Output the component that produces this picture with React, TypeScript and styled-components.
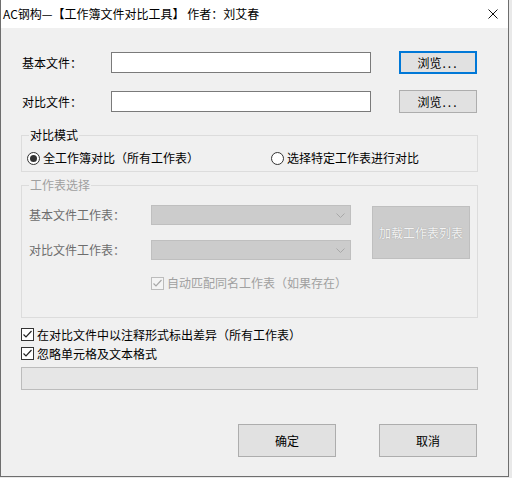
import React, { useState } from "react"
import styled, { createGlobalStyle } from "styled-components"

const GlobalStyle = createGlobalStyle`
  html, body {
    margin: 0;
    padding: 0;
    background: #e9e9e9;
  }
  body {
    font-family: "Noto Sans CJK SC", "Microsoft YaHei", sans-serif;
    font-size: 12px;
    color: #000;
  }
`

const Window = styled.div`
  box-sizing: border-box;
  width: 509px;
  height: 477px;
  background: #f0f0f0;
  border: 1px solid #6e6e6e;
  border-top: none;
  display: flex;
  flex-direction: column;
`

const TitleBar = styled.div`
  height: 28px;
  background: #fff;
  display: flex;
  align-items: center;
  justify-content: space-between;
  padding: 0 10px 0 2px;
  font-size: 12px;
  line-height: 16px;
`

const CloseIcon = () => (
  <svg width="10" height="10" viewBox="0 0 10 10">
    <path d="M0.5 0.5 L9.5 9.5 M9.5 0.5 L0.5 9.5" stroke="#111" strokeWidth="1" />
  </svg>
)

const Content = styled.div`
  display: flex;
  flex-direction: column;
  padding: 0 30px 0 20px;
`

const FileRow = styled.div<{ $top: number }>`
  display: flex;
  align-items: center;
  height: 23px;
  margin-top: ${(p) => p.$top}px;
  padding-left: 1px;
  & > span {
    width: 89px;
  }
  & > button {
    margin-left: 28px;
  }
`

const Label = styled.span<{ $disabled?: boolean }>`
  line-height: 16px;
  white-space: nowrap;
  color: ${(p) => (p.$disabled ? "#6d6d6d" : "#000")};
`

const TextInput = styled.input`
  box-sizing: border-box;
  width: 260px;
  height: 21px;
  border: 1px solid #7a7a7a;
  background: #fff;
  margin: 0;
  outline: none;
`

const Button = styled.button<{ $focused?: boolean; $w?: number; $h?: number }>`
  box-sizing: border-box;
  width: ${(p) => p.$w || 78}px;
  height: ${(p) => p.$h || 23}px;
  background: #e1e1e1;
  border: ${(p) => (p.$focused ? "2px solid #0078d7" : "1px solid #adadad")};
  font-family: inherit;
  font-size: 12px;
  color: #000;
  padding: 0;
  margin: 0;
  cursor: default;
  &:disabled {
    background: #cccccc;
    border-color: #bfbfbf;
    color: #f4f4f4;
    text-shadow: 0 0 1px #8c8c8c;
  }
`

const Dots = styled.span`
  letter-spacing: 2px;
  margin-left: 1px;
`

const Group = styled.fieldset<{ $top: number; $disabled?: boolean }>`
  margin: ${(p) => p.$top}px 0 0 0;
  padding: 0;
  border: 1px solid #dcdcdc;
  min-width: 0;
  legend {
    margin-left: 7px;
    padding: 0 1px;
    line-height: 16px;
    color: ${(p) => (p.$disabled ? "#a0a0a0" : "#000")};
  }
`

const ModeRow = styled.div`
  display: grid;
  grid-template-columns: 244px 1fr;
  padding: 7px 0 5px 5px;
`

const Option = styled.label<{ $disabled?: boolean }>`
  display: flex;
  align-items: center;
  gap: 3px;
  height: 16px;
  line-height: 16px;
  white-space: nowrap;
  color: ${(p) => (p.$disabled ? "#a0a0a0" : "#000")};
`

const RadioDot = styled.span<{ $on: boolean }>`
  box-sizing: border-box;
  width: 13px;
  height: 13px;
  border-radius: 50%;
  border: 1px solid #333;
  background: #fff;
  display: flex;
  align-items: center;
  justify-content: center;
  &::after {
    content: "";
    width: 7px;
    height: 7px;
    border-radius: 50%;
    background: ${(p) => (p.$on ? "#333" : "transparent")};
  }
`

const Box = styled.span<{ $disabled?: boolean }>`
  box-sizing: border-box;
  width: 13px;
  height: 13px;
  border: 1px solid ${(p) => (p.$disabled ? "#bcbcbc" : "#333")};
  background: ${(p) => (p.$disabled ? "#f4f4f4" : "#fff")};
  display: flex;
  align-items: center;
  justify-content: center;
`

const Tick = ({ color }: { color: string }) => (
  <svg width="11" height="11" viewBox="0 0 11 11">
    <path d="M1.5 5.5 L4 8 L9.5 2" fill="none" stroke={color} strokeWidth="1.2" />
  </svg>
)

const SheetGrid = styled.div`
  display: grid;
  grid-template-columns: 122px 200px 21px 98px;
  grid-template-rows: 20px 20px 16px;
  grid-template-areas:
    "l1 c1 . btn"
    "l2 c2 . btn"
    ". chk chk chk";
  row-gap: 15px;
  align-items: center;
  padding: 12px 0 26px 7px;
`

const Area = styled.div<{ $area: string }>`
  grid-area: ${(p) => p.$area};
  display: flex;
  align-items: center;
  min-width: 0;
`

const Combo = styled.div`
  box-sizing: border-box;
  width: 200px;
  height: 20px;
  background: #cccccc;
  border: 1px solid #bfbfbf;
  display: flex;
  align-items: center;
  justify-content: flex-end;
  padding-right: 5px;
`

const Chevron = () => (
  <svg width="9" height="5" viewBox="0 0 9 5">
    <path d="M0.5 0.5 L4.5 4.5 L8.5 0.5" fill="none" stroke="#a8a8a8" strokeWidth="1" />
  </svg>
)

const OptionsList = styled.div`
  display: flex;
  flex-direction: column;
  margin-top: 7px;
  label {
    height: 19px;
  }
`

const StatusBar = styled.div`
  box-sizing: border-box;
  height: 23px;
  margin-top: 4px;
  background: #e6e6e6;
  border: 1px solid #bcbcbc;
`

const Actions = styled.div`
  display: flex;
  justify-content: flex-end;
  gap: 43px;
  margin-top: 34px;
  padding-right: 1px;
`

function App() {
  const [mode, setMode] = useState<"all" | "sheet">("all")
  const [annotate, setAnnotate] = useState(true)
  const [ignoreFormat, setIgnoreFormat] = useState(true)

  return (
    <>
      <GlobalStyle />
      <Window>
        <TitleBar>
          <span>AC钢构—【工作簿文件对比工具】 作者：刘艾春</span>
          <CloseIcon />
        </TitleBar>
        <Content>
          <FileRow $top={23}>
            <Label>基本文件：</Label>
            <TextInput />
            <Button $focused>浏览<Dots>...</Dots></Button>
          </FileRow>
          <FileRow $top={16}>
            <Label>对比文件：</Label>
            <TextInput />
            <Button>浏览<Dots>...</Dots></Button>
          </FileRow>

          <Group $top={14}>
            <legend>对比模式</legend>
            <ModeRow>
              <Option onClick={() => setMode("all")}>
                <RadioDot $on={mode === "all"} />
                全工作簿对比（所有工作表）
              </Option>
              <Option onClick={() => setMode("sheet")}>
                <RadioDot $on={mode === "sheet"} />
                选择特定工作表进行对比
              </Option>
            </ModeRow>
          </Group>

          <Group $top={5} $disabled>
            <legend>工作表选择</legend>
            <SheetGrid>
              <Area $area="l1"><Label $disabled>基本文件工作表：</Label></Area>
              <Area $area="c1"><Combo><Chevron /></Combo></Area>
              <Area $area="l2"><Label $disabled>对比文件工作表：</Label></Area>
              <Area $area="c2"><Combo><Chevron /></Combo></Area>
              <Area $area="btn">
                <Button disabled $w={98} $h={53}>加载工作表列表</Button>
              </Area>
              <Area $area="chk">
                <Option $disabled>
                  <Box $disabled><Tick color="#a8a8a8" /></Box>
                  自动匹配同名工作表（如果存在）
                </Option>
              </Area>
            </SheetGrid>
          </Group>

          <OptionsList>
            <Option onClick={() => setAnnotate(!annotate)}>
              <Box>{annotate && <Tick color="#222" />}</Box>
              在对比文件中以注释形式标出差异（所有工作表）
            </Option>
            <Option onClick={() => setIgnoreFormat(!ignoreFormat)}>
              <Box>{ignoreFormat && <Tick color="#222" />}</Box>
              忽略单元格及文本格式
            </Option>
          </OptionsList>

          <StatusBar />

          <Actions>
            <Button $w={98} $h={33}>确定</Button>
            <Button $w={98} $h={33}>取消</Button>
          </Actions>
        </Content>
      </Window>
    </>
  )
}

export default App
